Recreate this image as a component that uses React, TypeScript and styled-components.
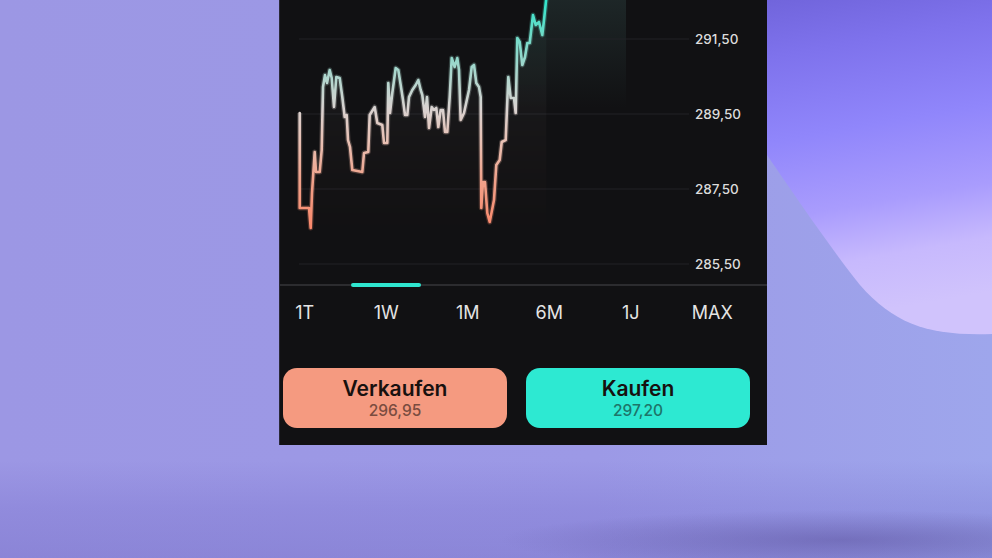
import React from "react";
import styled, { createGlobalStyle } from "styled-components";

const GlobalStyle = createGlobalStyle`
  html, body {
    margin: 0;
    padding: 0;
    overflow: hidden;
  }
  body {
    font-family: "Inter", "Liberation Sans", sans-serif;
  }
`;

const Stage = styled.main`
  position: relative;
  width: 992px;
  height: 558px;
  overflow: hidden;
  background:
    radial-gradient(ellipse 340px 30px at 840px 540px, rgba(90, 80, 155, 0.5), rgba(90, 80, 155, 0) 100%),
    linear-gradient(180deg, rgba(120, 110, 200, 0) 0px, rgba(120, 110, 200, 0) 460px, rgba(100, 90, 190, 0.2) 508px, rgba(95, 85, 180, 0.28) 558px),
    linear-gradient(90deg, #9c97e4 0%, #9c99e6 60%, #9ea6ec 100%);
`;

const Backdrop = styled.svg`
  position: absolute;
  inset: 0;
  z-index: 0;
`;

const Phone = styled.section`
  position: relative;
  z-index: 1;
  margin-left: 279px;
  width: 488px;
  height: 445px;
  background: #111113;
  border-left: 1px solid #2a2838;
  box-sizing: border-box;
  display: flex;
  flex-direction: column;
  overflow: hidden;
`;

const ChartSvg = styled.svg`
  display: block;
  flex: none;
`;

const AxisLabel = styled.text`
  font-family: "Inter", "Liberation Sans", sans-serif;
  font-size: 13.5px;
  font-weight: 500;
  fill: #dcdcdc;
`;

const TabRow = styled.nav`
  display: grid;
  grid-template-columns: repeat(6, 81.5px);
  margin-left: -16px;
  height: 53px;
  border-top: 2px solid #2c2c2f;
  align-items: center;
`;

const Tab = styled.span<{ $active?: boolean }>`
  position: relative;
  height: 100%;
  display: flex;
  align-items: center;
  justify-content: center;
  font-size: 18px;
  font-weight: 400;
  color: #e4e4e4;
  &::before {
    content: "";
    display: ${(p) => (p.$active ? "block" : "none")};
    position: absolute;
    top: -3px;
    left: 50%;
    width: 70px;
    height: 4px;
    margin-left: -35px;
    border-radius: 2px;
    background: #2fe6cf;
  }
`;

const ButtonRow = styled.div`
  display: flex;
  gap: 19px;
  padding: 29px 17px 17px 3px;
`;

const TradeButton = styled.button<{ $bg: string; $sub: string }>`
  flex: 1;
  height: 60px;
  border: none;
  border-radius: 14px;
  background: ${(p) => p.$bg};
  display: flex;
  flex-direction: column;
  align-items: center;
  justify-content: center;
  gap: 1px;
  font-family: "Inter", "Liberation Sans", sans-serif;
  padding: 0;
  span:first-child {
    font-size: 21px;
    font-weight: 600;
    color: #17110f;
    line-height: 24px;
  }
  span:last-child {
    font-size: 15.5px;
    font-weight: 500;
    color: ${(p) => p.$sub};
    line-height: 18px;
  }
`;

// screen-space trace of the price line (x offset by the panel's left edge)
const trace: [number, number][] = [
  [298.7, 113], [298.7, 208], [308, 208], [309.7, 228], [311, 193], [313.7, 152],
  [315, 172], [318.7, 172], [320.7, 150], [322, 87], [324, 75], [326, 83],
  [328.7, 70], [330.7, 78], [333, 107], [335.3, 77], [338.7, 78], [341.3, 97],
  [343.7, 117], [345.7, 115], [347, 140], [349, 147], [351.3, 170], [361.3, 172],
  [363, 153], [367.3, 152], [368.7, 115], [373.7, 107], [376.3, 123], [381.3, 125],
  [383, 143], [386.3, 143], [387.3, 83], [389, 113], [391.3, 93], [394.7, 68],
  [397.3, 70], [399.7, 85], [402, 100], [404, 115], [406.3, 115], [408, 97],
  [411.3, 90], [414.7, 85], [417.3, 80], [419.7, 90], [421.3, 95], [424, 117],
  [426, 97], [428, 128], [430.7, 107], [433, 110], [435.3, 108], [437.3, 127],
  [439.7, 110], [442, 110], [444, 132], [446.3, 132], [448.7, 97], [450.7, 58],
  [453.7, 67], [456.3, 58], [458, 70], [459.7, 120], [463, 113], [468, 90],
  [470.7, 67], [473, 65], [475.3, 83], [478, 87], [479.7, 97], [480.3, 208],
  [482, 182], [484, 182], [486.3, 213], [488.7, 222], [493, 200], [495.3, 165],
  [498.7, 160], [500.7, 142], [504.7, 140], [507.3, 77], [509.7, 98], [513, 98],
  [514.7, 113], [516.3, 38], [518.7, 42], [521.3, 65], [524, 57], [526.3, 43],
  [528.7, 43], [532, 15], [534.7, 25], [538, 22], [541.3, 35], [543, 20], [545.3, -2],
];

const pts = trace.map(([x, y]) => [x - 279, y] as [number, number]);
const toPath = (list: [number, number][]) =>
  list.map(([x, y], i) => `${i ? "L" : "M"}${x.toFixed(1)} ${y}`).join(" ");
const linePath = toPath(pts);
const areaPath = `${linePath} L${pts[pts.length - 1][0].toFixed(1)} 284 L${pts[0][0].toFixed(1)} 284 Z`;
const tail = pts.filter(([x]) => x >= 235);
const glowPath = `${toPath(tail)} L346 -2 L346 108 L${tail[0][0].toFixed(1)} 108 Z`;

const gridRows = [
  { y: 39, label: "291,50" },
  { y: 114, label: "289,50" },
  { y: 189, label: "287,50" },
  { y: 264, label: "285,50" },
];

const tabs = ["1T", "1W", "1M", "6M", "1J", "MAX"];

function PriceChart() {
  return (
    <ChartSvg width={487} height={284} viewBox="0 0 487 284">
      <defs>
        <linearGradient id="lineGrad" gradientUnits="userSpaceOnUse" x1="0" y1="0" x2="0" y2="230">
          <stop offset="0" stopColor="#2fe6cc" />
          <stop offset="0.15" stopColor="#6edbc8" />
          <stop offset="0.3" stopColor="#a5d7cd" />
          <stop offset="0.47" stopColor="#d9d3d1" />
          <stop offset="0.62" stopColor="#e9c0b3" />
          <stop offset="0.78" stopColor="#f0a28b" />
          <stop offset="1" stopColor="#fb876a" />
        </linearGradient>
        <linearGradient id="areaFade" gradientUnits="userSpaceOnUse" x1="0" y1="80" x2="0" y2="240">
          <stop offset="0" stopColor="#fff" stopOpacity="1" />
          <stop offset="1" stopColor="#fff" stopOpacity="0" />
        </linearGradient>
        <mask id="areaMask">
          <rect x="0" y="0" width="487" height="284" fill="url(#areaFade)" />
        </mask>
        <linearGradient id="glow" gradientUnits="userSpaceOnUse" x1="0" y1="0" x2="0" y2="108">
          <stop offset="0" stopColor="#3a5856" stopOpacity="0.3" />
          <stop offset="1" stopColor="#3a5856" stopOpacity="0" />
        </linearGradient>
      </defs>
      <path d={glowPath} fill="url(#glow)" />
      {gridRows.map((r) => (
        <g key={r.label}>
          <line x1="19" x2="409" y1={r.y} y2={r.y} stroke="#222226" strokeWidth="1" />
          <AxisLabel x="415" y={r.y + 5}>{r.label}</AxisLabel>
        </g>
      ))}
      <path d={areaPath} fill="url(#lineGrad)" opacity="0.04" mask="url(#areaMask)" />
      <path d={linePath} fill="none" stroke="url(#lineGrad)" strokeOpacity="0.25" strokeWidth="5" strokeLinejoin="round" />
      <path d={linePath} fill="none" stroke="url(#lineGrad)" strokeWidth="2.6" strokeLinejoin="round" strokeLinecap="round" />
    </ChartSvg>
  );
}

export default function App() {
  return (
    <>
      <GlobalStyle />
      <Stage>
        <Backdrop width={992} height={558} viewBox="0 0 992 558">
          <defs>
            <linearGradient id="blob" x1="0" y1="0" x2="0.15" y2="1">
              <stop offset="0" stopColor="#6e62d8" />
              <stop offset="0.2" stopColor="#7e72ec" />
              <stop offset="0.45" stopColor="#9086fb" />
              <stop offset="0.68" stopColor="#a99cfd" />
              <stop offset="0.84" stopColor="#c7b9fd" />
              <stop offset="1" stopColor="#d0c3fc" />
            </linearGradient>
          </defs>
          <path
            d="M700 55 C760 145, 820 235, 860 285 C895 325, 930 336, 992 334 L992 0 L700 0 Z"
            fill="url(#blob)"
          />
        </Backdrop>
        <Phone>
          <PriceChart />
          <TabRow>
            {tabs.map((t) => (
              <Tab key={t} $active={t === "1W"}>{t}</Tab>
            ))}
          </TabRow>
          <ButtonRow>
            <TradeButton $bg="#f59a80" $sub="#7a4c3f">
              <span>Verkaufen</span>
              <span>296,95</span>
            </TradeButton>
            <TradeButton $bg="#2de9d2" $sub="#1d7569">
              <span>Kaufen</span>
              <span>297,20</span>
            </TradeButton>
          </ButtonRow>
        </Phone>
      </Stage>
    </>
  );
}
